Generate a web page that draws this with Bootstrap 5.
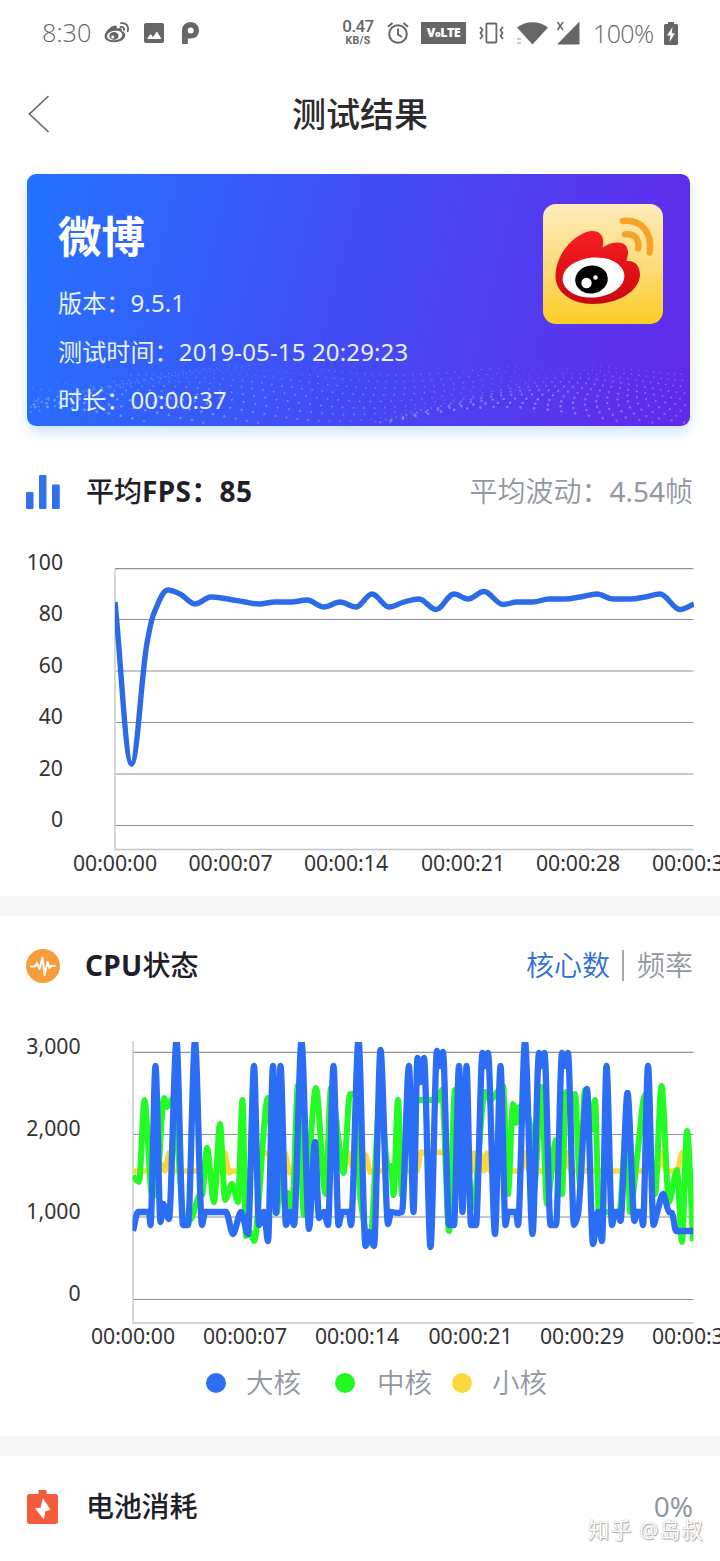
<!DOCTYPE html>
<html lang="zh-CN">
<head>
<meta charset="utf-8">
<meta name="viewport" content="width=device-width, initial-scale=1">
<title>测试结果</title>
<link href="https://cdn.jsdelivr.net/npm/bootstrap@5.3.0/dist/css/bootstrap.min.css" rel="stylesheet">
<style>
body{font-family:"Noto Sans","Noto Sans CJK SC",sans-serif;background:#fff;color:#1f2027;overflow:hidden}
.screen{width:720px;height:1561px;overflow:hidden;line-height:1}
.screen svg{display:block;flex:none}
.status{height:66px;padding:0 42px 0 42px;color:#666}
.status .clock{font:300 25.3px/1 "Open Sans","Noto Sans",sans-serif;width:62px;white-space:nowrap}
.status .level{font-size:25px;letter-spacing:-.6px;margin-left:13px;width:62px}
.speed{width:36px;font-family:Roboto,sans-serif;font-weight:500;text-align:center}
.speed b{display:block;font-size:17px;font-weight:500;line-height:17px;letter-spacing:-.6px;margin-top:-2px}
.speed i{display:block;font-style:normal;font-size:10.5px;font-weight:700;line-height:11px;letter-spacing:.3px}
.volte{width:45px;height:22px;background:#666;color:#fff;font:800 12.5px/22px "Open Sans",sans-serif;text-align:center;letter-spacing:-.5px}
.volte small{font-size:9px;position:relative;top:0}
.titlebar{height:96px}
.titlebar h1{font-size:34px;font-weight:500;line-height:40px;color:#2b2b2b}
.back{left:28px;top:29px}
.result{height:252px;margin:12px 30px 0 27px;border:0;border-radius:9px;background:linear-gradient(104deg,#2571ff 3%,#4549f4 53%,#622aea 98%);box-shadow:0 7px 12px rgba(90,170,250,.28);color:#fff}
.result .wave{left:0;top:0}
.result .info{padding:40px 0 0 31px}
.result h2{font-size:43.5px;font-weight:700;line-height:44px;margin:0 0 21px}
.result .info div{font-size:24px;line-height:48.5px;letter-spacing:.15px;color:#e9f1ff;white-space:nowrap}
.appicon{margin:30px 27px 0 0}
.sec-head{padding:0 27px 0 26px;height:40px}
.sec-head h3{font-size:28px;font-weight:500;line-height:40px;color:#1f2027;margin:-2px 0 0 25px}
.sec-head h3 b{font-weight:700;letter-spacing:.35px}
.sec-head .aside{font-size:28px;font-weight:350;line-height:40px;color:#92979f;white-space:nowrap;margin-top:-2px}
.aside .num{font-weight:400}
.aside .on{color:#2c6de0}
.aside .bar{width:2px;height:31px;background:#a5a9b0;margin:0 13px 0 12px}
.divide{height:20px;background:#f6f6f6}
.axis text{font-size:21.2px;fill:#333}
.legend-row{height:40px;font-size:27.5px;font-weight:350;color:#92979f;line-height:40px;padding-left:206px}
.dot{width:20px;height:20px;border-radius:50%}
.stamp{left:588px;top:1517px;font-size:21.3px;line-height:26px;color:#fff;text-shadow:0 0 1px #999,1px 1px 1px #aaa;white-space:nowrap;letter-spacing:1px}
</style>
</head>
<body>
<main class="screen position-relative">
  <header class="status d-flex align-items-center">
    <span class="clock">8:30</span>
    <svg width="26" height="22" viewBox="0 0 26 22"><g fill="none" stroke="#666" stroke-width="1.8" stroke-linecap="round"><path d="M17 1.200C22 .5 25 4 23.800 9"/><path d="M16.500 5C19 4.500 20.600 6 20 8.300"/></g><path fill="#666" fill-rule="evenodd" d="M9 4C12 2.500 13.500 4 12.800 6.500C16 5.200 18.500 6 17.800 9C20.500 10 22 12 21 14.600C19.500 18.500 15 20.500 9.500 20.200C4 20 .5 17.500.6 14C.8 10.500 5 5.500 9 4ZM10.500 8.800C6 9.300 2.800 11.700 3 14.500C3.300 17.200 6.500 18.700 11 18.200C15.500 17.700 18.600 15.300 18.300 12.500C18 9.800 15 8.300 10.500 8.800Z"/><ellipse cx="10" cy="14" rx="4.600" ry="3.900" fill="#666"/><circle cx="8.700" cy="15" r="1.500" fill="#fff"/></svg>
    <svg style="margin-left:14px" width="20" height="20" viewBox="0 0 20 20"><rect width="20" height="20" rx="2" fill="#666"/><path d="M3 16L6.500 11L9 14L13 8.500L17.500 16Z" fill="#fff"/></svg>
    <svg style="margin-left:18px" width="17" height="22" viewBox="0 0 17 22"><path fill="#666" fill-rule="evenodd" d="M0 22V9C0 3.500 3.500 0 8.500 0S17 3.500 17 8.500S13.500 16.500 9 16.500H5.800V22ZM8.700 5.500A3 3 0 1 0 8.700 11.500A3 3 0 1 0 8.700 5.500Z"/></svg>
    <span class="speed ms-auto"><b>0.47</b><i>KB/S</i></span>
    <svg style="margin-left:11px" width="22" height="22" viewBox="0 0 22 22" fill="none" stroke="#666" stroke-width="2"><circle cx="11" cy="12" r="8.800"/><path d="M11 6.500V12.500L15 15M1 4.800L5.500 1M21 4.800L16.500 1"/></svg>
    <span class="volte" style="margin-left:12px">V<small>o</small>LTE</span>
    <svg style="margin-left:13px" width="25" height="22" viewBox="0 0 25 22" fill="none" stroke="#666" stroke-width="1.800"><rect x="7.400" y="1.500" width="10" height="19" rx="1"/><path d="M1 5L3.500 8L1.500 11L3.500 14L1 17M24 5L21.500 8L23.500 11L21.500 14L24 17"/></svg>
    <svg style="margin-left:12px" width="33" height="23" viewBox="0 0 33 23"><path fill="#666" d="M1 5.500C10-1.500 23-1.500 32 5.500L16.500 22.500Z"/><path d="M1 17H5M1 21H5" stroke="#bbb" stroke-width="1.500"/></svg>
    <svg style="margin-left:7px" width="24" height="24" viewBox="0 0 24 24"><path d="M23.500 .5V23.500H1Z" fill="#666"/><path d="M1.500 1L7 9M7 1L1.500 9" stroke="#666" stroke-width="1.500"/></svg>
    <span class="clock level">100%</span>
    <svg style="margin-left:9px" width="14" height="23" viewBox="0 0 14 23"><path fill="#666" d="M4 0H10V2H12.500Q14 2 14 3.500V21.500Q14 23 12.500 23H1.500Q0 23 0 21.500V3.500Q0 2 1.500 2H4Z"/><path d="M8.500 5L3 13.500H6.300L5.500 20L11 11.300H7.800Z" fill="#fff"/></svg>
  </header>
  <nav class="titlebar position-relative d-flex justify-content-center align-items-center">
    <svg class="back position-absolute" width="22" height="38" viewBox="0 0 22 38"><path d="M20.500 1L1.500 19L20.500 37" fill="none" stroke="#6a6a6a" stroke-width="1.700"/></svg>
    <h1 class="m-0">测试结果</h1>
  </nav>
  <section class="card result position-relative overflow-visible">
    <svg class="wave position-absolute" width="663" height="252" viewBox="0 0 663 252" id="wave"></svg>
    <div class="d-flex justify-content-between position-relative">
      <div class="info">
        <h2>微博</h2>
        <div>版本：9.5.1</div><div>测试时间：2019-05-15 20:29:23</div><div>时长：00:00:37</div>
      </div>
      <svg class="appicon" width="120" height="120" viewBox="0 0 120 120">
        <defs><linearGradient id="ig" x1="0" y1="0" x2="0" y2="1"><stop offset="0" stop-color="#fdebba"/><stop offset=".5" stop-color="#fcdd7c"/><stop offset="1" stop-color="#fccc24"/></linearGradient><linearGradient id="rg" x1="0" y1="0" x2="0" y2="1"><stop offset="0" stop-color="#fb1d25"/><stop offset="1" stop-color="#c9080b"/></linearGradient></defs>
        <rect width="120" height="120" rx="13" fill="url(#ig)"/>
        <path fill="url(#rg)" d="M12.500 71C13 52 27 35 41 29C53 24 63 29 59.500 43.500C69 37 82 36 84.500 45C86 50 84 53 83.500 57C92 56 97 62 97 71C96 88 74 100 50 100C28 100 12 88 12.500 71Z"/>
        <ellipse cx="50.500" cy="73.500" rx="31" ry="20" transform="rotate(-5 50.500 73.500)" fill="#fff"/>
        <ellipse cx="48.500" cy="75.500" rx="16.300" ry="14" transform="rotate(-10 48.500 75.500)"/>
        <circle cx="43.500" cy="79" r="5.200" fill="#fff"/><circle cx="52.500" cy="73.500" r="2.200" fill="#fff"/>
        <g fill="none" stroke="#f6a327" stroke-width="6.500" stroke-linecap="round"><path d="M80 17C98 15 110 29 106.500 48.500"/><path d="M82 30.500C91 29 97 35 95 44.500"/></g>
      </svg>
    </div>
  </section>

  <section>
    <div class="sec-head d-flex align-items-center" style="margin-top:46px">
      <svg width="35" height="34" viewBox="0 0 35 34" fill="#3070e8"><rect y="17" width="7.500" height="17" rx="1.200"/><rect x="13" width="7.500" height="34" rx="1.200"/><rect x="26" y="9.500" width="7.800" height="24.500" rx="1.200"/></svg>
      <h3>平均<b>FPS：85</b></h3><span class="aside ms-auto">平均波动：<span class="num">4.54</span>帧</span>
    </div>
    <svg class="axis" id="fps" style="margin-top:28px" width="720" height="340" viewBox="0 540 720 340"></svg>
  </section>
  <div class="divide" style="margin-top:16px"></div>
  <section>
    <div class="sec-head d-flex align-items-center" style="margin-top:30px">
      <svg width="34" height="34" viewBox="0 0 34 34"><circle cx="17" cy="17" r="17" fill="#f79d3b"/><path d="M5 17.500H9L11 14L13.500 20L16.500 8.500L18.500 26L21.500 13L23.500 19L25 17H29" fill="none" stroke="#fff" stroke-width="2" stroke-linejoin="round" stroke-linecap="round"/></svg>
      <h3 style="margin-left:25px"><b>CPU</b>状态</h3>
      <div class="aside ms-auto d-flex align-items-center"><span class="on">核心数</span><span class="bar"></span><span>频率</span></div>
    </div>
    <svg class="axis" id="cpu" style="margin-top:34px" width="720" height="340" viewBox="0 1020 720 340"></svg>
    <div class="legend-row d-flex align-items-center" style="margin-top:3px">
      <span class="dot" style="background:#2c6ff2"></span><span style="margin-left:20px">大核</span>
      <span class="dot" style="background:#23f723;margin-left:34px"></span><span style="margin-left:22px">中核</span>
      <span class="dot" style="background:#fbd83b;margin-left:20px"></span><span style="margin-left:20px">小核</span>
    </div>
  </section>
  <div class="divide" style="margin-top:33px"></div>
  <section class="sec-head d-flex align-items-center" style="margin-top:31px">
    <svg width="34" height="34" viewBox="0 0 34 34"><path fill="#f45c3b" d="M12.500 0H20.500V4H29.500Q32 4 32 6.500V31.500Q32 34 29.500 34H3.500Q1 34 1 31.500V6.500Q1 4 3.500 4H12.500Z"/><path fill="#fff" d="M18.500 11.500L19.800 17.200L27.500 19L15.500 27L15.500 21.300L6 18Z" transform="rotate(84 17 19)"/></svg>
    <h3 style="margin-left:26px;letter-spacing:-.2px">电池消耗</h3><span class="aside ms-auto"><span class="num">0%</span></span>
  </section>
  <div class="stamp position-absolute">知乎 @岛叔</div>
</main>
<script src="https://cdn.jsdelivr.net/npm/bootstrap@5.3.0/dist/js/bootstrap.bundle.min.js"></script>
<script>
// Monotone cubic path through "x,y x,y ..." points.
function curve(s, k) {
  const p = s.trim().split(/\s+/).map(t => t.split(',').map(Number)), n = p.length;
  const d = p.slice(1).map((q, i) => (q[1] - p[i][1]) / (q[0] - p[i][0]));
  const m = p.map((q, i) => i === 0 ? d[0] : i === n - 1 ? d[n - 2] : d[i - 1] * d[i] <= 0 ? 0 : 2 * d[i - 1] * d[i] / (d[i - 1] + d[i]));
  let o = 'M' + p[0];
  for (let i = 1; i < n; i++) {
    const h = (p[i][0] - p[i - 1][0]) * k;
    o += `C${p[i-1][0]+h},${p[i-1][1]+m[i-1]*h} ${p[i][0]-h},${p[i][1]-m[i]*h} ${p[i]}`;
  }
  return o;
}
function axes(x0, top, bottom, ys, labels, lx, ty, xs) {
  let o = ys.map((y, i) => `<path d="M${x0} ${y}H693.500" stroke="#929292" stroke-width="1.200"/><text x="${lx}" y="${y + 1.5}" text-anchor="end">${labels[i]}</text>`).join('');
  o += `<path d="M${x0} ${top}V${bottom}H693.500" fill="none" stroke="#c4c4c4" stroke-width="1.300"/>`;
  return o + xs.map(a => `<text x="${a[0]}" y="${ty}" text-anchor="middle">${a[1]}</text>`).join('');
}
const line = (s, c, k, id, w) => `<path clip-path="url(#${id})" d="${curve(s, k)}" fill="none" stroke="${c}" stroke-width="${w}" stroke-linejoin="round"/>`;
document.getElementById('fps').innerHTML =
  '<clipPath id="c1"><rect x="115" y="560" width="579" height="290"/></clipPath>' +
  axes(115, 568.5, 849.5, [568.7, 619.5, 671, 722.5, 774, 825.5], [100, 80, 60, 40, 20, 0], 63, 870.5,
    [[115,'00:00:00'],[230.5,'00:00:07'],[346,'00:00:14'],[463,'00:00:21'],[578,'00:00:28'],[694,'00:00:35']]) +
  line('115,602 131.500,764 147,643 154,613 168,590 180,594 195,604 211,597 228,599 245,602 259,604 275,602 291,602 307,600 324,607 340,602 356,607 372,594 389,607 404,602 419,599 436,609.500 454,594 468,599 484,591.500 503,604.500 517,602 533,602 549,599 565,599 580,597 597,594 613,599 630,599 645,597 660,594 680,609.500 694,604', '#2c6be8', .36, 'c1', 5.4);
const small = '133,1171 160,1171 163,1165 165,1171 169,1153 173,1171 221,1171 225,1153 229,1173 232,1171 256,1171 260,1153 268,1153 273,1171 280,1171 285,1153 290,1173 300,1171 322,1171 330,1153 348,1153 352,1166 356,1153 366,1155 370,1172 375,1171 392,1171 404,1171 417,1171 421,1152 427,1154 434,1152 449,1154 456,1171 464,1153 472,1171 474,1153 477,1171 480,1153 484,1171 487,1153 490,1171 521,1171 525,1153 529,1171 547,1171 552,1150 556,1171 563,1171 567,1153 571,1171 653,1171 657,1171 662,1153 666,1171 677,1171 682,1153 687,1150';
const mid = '133,1176 139,1182 144.500,1100 152,1195 156,1195 164,1098 167,1107 173,1098 178,1150 184,1220 190,1220 200,1195 202,1195 207,1148 214,1202 220,1124 225,1200 232,1184 238,1202 242.500,1100 246,1236 250,1232 254,1241 268,1098 277,1213 281,1150 285,1205 288,1193 292,1213 298,1085 304,1215 316,1088 325.500,1194 331,1088 341,1160 343.500,1173 350,1094 356,1094 360,1195 370,1243 380,1100 388,1166 391,1166 393.500,1195 398,1100 402,1195 410,1100 420,1100 438,1100 442,1090 449,1231 455,1090 460,1090 473,1207 485,1092 490,1100 503,1086 508,1194 513,1104 516,1123 518,1108 524,1106 531,1130 534,1190 541.500,1087 547,1204 556,1140 562,1194 566,1092 571,1105 575,1094 580,1184 585,1090 591,1130 595,1100 599,1215 607,1212 619,1215 627,1120 630,1212 637,1158 645,1095 655,1194 661.500,1086 669,1202 677,1170 682,1242 687,1131 693,1241';
const big = '133,1231 138,1212 149,1212 150.500,1225 155.500,1066 160.500,1222 163,1204 169,1219 176.500,1041 183,1225 188,1225 195,1041 202,1225 205,1212 226,1212 233,1234 241,1212 248,1234 254,1066 259,1225 264,1212 268,1241 273,1066 276,1213 280.500,1066 286,1225 290,1212 294,1225 301.500,1041 309,1229 315,1142 319,1218 324,1212 328,1225 333.500,1066 338.500,1225 342,1212 349,1212 351,1225 358.500,1040 365.500,1246 369,1232 374,1246 380.500,1050 388,1224 391,1212 398,1213 402,1212 409,1066 413.500,1212 417.500,1058 420.500,1082 424,1058 430.500,1247 437,1051 440,1066 443,1052 449,1225 454,1225 459,1066 462.500,1212 466.500,1066 471,1225 476,1225 482.500,1053 485,1066 488,1053 495,1234 500.500,1066 505.500,1225 508,1212 516,1212 518,1225 525,1041 532.500,1234 539,1053 541.500,1066 544.500,1053 550.500,1225 556,1225 562,1053 565,1066 568,1053 574,1225 578,1214 587,1089 593,1244 598,1212 602,1241 606.500,1066 612,1225 615,1212 618,1212 620.500,1221 627.500,1093 634.500,1221 637,1212 641,1212 643,1225 648,1066 653.500,1225 657,1213 663,1194 669,1212 672,1213 676,1231 693.500,1231';
document.getElementById('cpu').innerHTML =
  '<clipPath id="c2"><rect x="132.500" y="1042" width="561" height="282"/></clipPath>' +
  axes(133, 1041, 1323, [1052.3, 1134.5, 1217, 1299.5], ['3,000', '2,000', '1,000', '0'], 80.5, 1344,
    [[133,'00:00:00'],[245,'00:00:07'],[357,'00:00:14'],[470.5,'00:00:21'],[582,'00:00:29'],[694,'00:00:36']]) +
  line(small, '#fbd73f', .3, 'c2', 5.5) + line(mid, '#24fa24', .3, 'c2', 6) + line(big, '#2b6df4', .3, 'c2', 6.3);
// Perspective dot mesh along the lower edge of the result card.
let dots = '';
for (let r = 0; r < 11; r++) for (let i = 0; i < 92; i++) {
  const u = i / 91, x = 331 + (u - .5) * (690 + r * 46) + 12 * Math.sin(r * .6 + u * 9);
  const y = 196 + r * 5.4 + (5 + r * 1.2) * Math.sin(u * 15 + r * .22 - .7) + (u < .15 ? 12 : 0);
  if (x > 4 && x < 658 && y < 249) dots += `<circle cx="${x.toFixed(1)}" cy="${y.toFixed(1)}" r="${(.65 + r * .07).toFixed(2)}" opacity="${(.12 + .38 * Math.abs(Math.sin(u * 8 + r * .3))).toFixed(2)}"/>`;
}
document.getElementById('wave').innerHTML = `<g fill="#b4c8ff">${dots}</g>`;
</script>
</body>
</html>
